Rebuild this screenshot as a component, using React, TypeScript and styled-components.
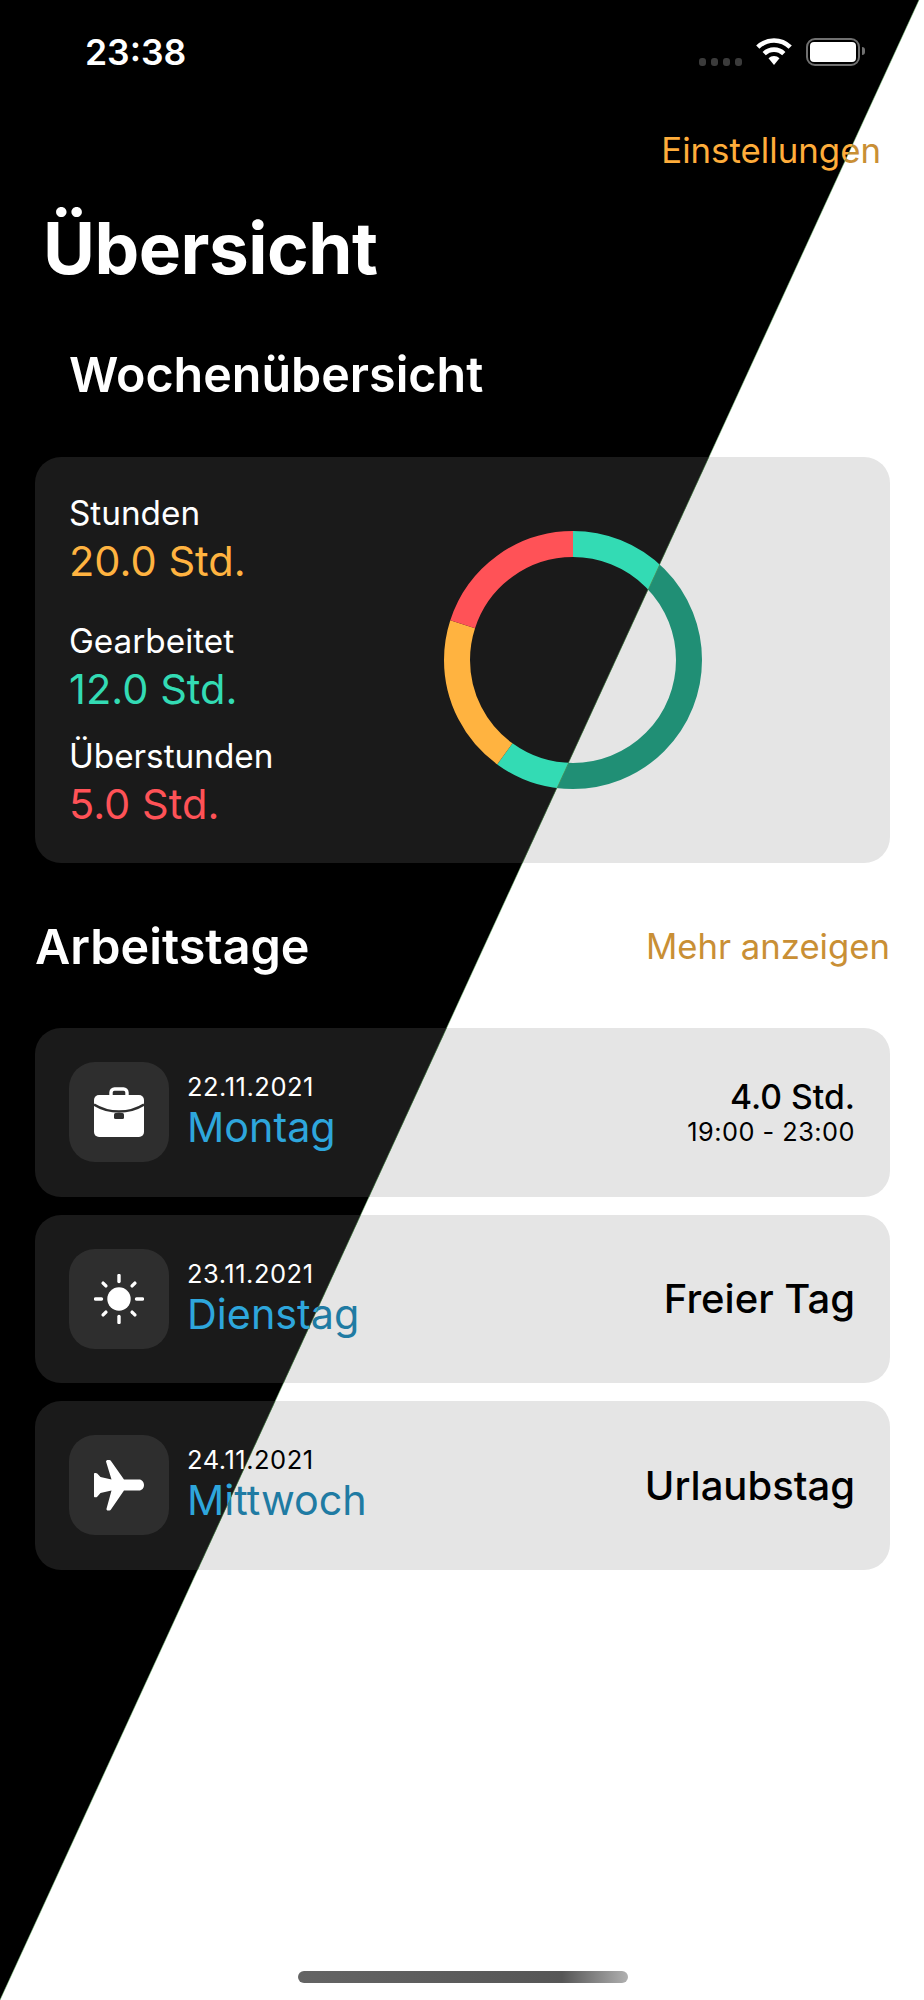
import React from "react";
import styled, { createGlobalStyle, ThemeProvider, useTheme } from "styled-components";

const GlobalStyle = createGlobalStyle`
  html, body {
    margin: 0;
    background: #fff;
    font-family: Inter, "Liberation Sans", sans-serif;
  }
`;

const lightTheme = {
  bg: "#ffffff",
  text: "#000000",
  card: "#e5e5e5",
  tile: "#d4d4d4",
  accent: "#c98f35",
  orange: "#c98f35",
  teal: "#208f75",
  red: "#c9434a",
  blue: "#1f7ba3",
};

const darkTheme = {
  bg: "#000000",
  text: "#ffffff",
  card: "#1a1a1a",
  tile: "#2e2e2e",
  accent: "#ffad3b",
  orange: "#ffb340",
  teal: "#33dbb4",
  red: "#ff5257",
  blue: "#2ea6dc",
};

type AppTheme = typeof darkTheme;
type Tone = "orange" | "teal" | "red";

const Page = styled.div`
  position: relative;
  width: 924px;
  height: 2000px;
  overflow: hidden;
`;

// The dark version lies over the light one, cut along the diagonal.
const DarkLayer = styled.div`
  position: absolute;
  inset: 0;
  clip-path: polygon(0 0, 919px 0, 0 100%);
`;

const SeamLine = styled.svg`
  position: absolute;
  inset: 0;
`;

const Screen = styled.div`
  width: 924px;
  height: 2000px;
  box-sizing: border-box;
  display: flex;
  flex-direction: column;
  background: ${({ theme }) => theme.bg};
  color: ${({ theme }) => theme.text};
`;

const StatusBar = styled.div`
  height: 104px;
  padding: 0 64px 0 85px;
  display: flex;
  align-items: center;
  justify-content: space-between;
`;

const Clock = styled.span`
  font-size: 35.5px;
  font-weight: 600;
`;

const StatusIcons = styled.div`
  display: flex;
  align-items: center;
`;

const SignalDots = styled.div`
  display: flex;
  gap: 5px;
  margin: 20px 14px 0 0;
`;

const SignalDot = styled.i`
  width: 7px;
  height: 8px;
  border-radius: 3px;
  background: #3b3b3b;
`;

const Battery = styled.div`
  position: relative;
  width: 54px;
  height: 28px;
  margin-left: 14px;
  box-sizing: border-box;
  border: 2.5px solid #707070;
  border-radius: 9px;
  padding: 2px;
  &::before {
    content: "";
    display: block;
    height: 100%;
    border-radius: 4px;
    background: ${({ theme }) => theme.text};
  }
  &::after {
    content: "";
    position: absolute;
    right: -7px;
    top: 6.5px;
    width: 3px;
    height: 8px;
    border-radius: 0 4px 4px 0;
    background: #707070;
  }
`;

const NavRow = styled.div`
  margin-top: 26px;
  padding-right: 43px;
  display: flex;
  justify-content: flex-end;
`;

const NavLink = styled.a`
  font-size: 34.8px;
  line-height: 40px;
  color: ${({ theme }) => theme.accent};
`;

const LargeTitle = styled.h1`
  margin: 38px 0 0 43px;
  font-size: 71px;
  line-height: 80px;
  font-weight: 700;
  letter-spacing: -0.5px;
`;

const WeekTitle = styled.h2`
  margin: 59px 0 0 69px;
  font-size: 48.4px;
  line-height: 56px;
  font-weight: 600;
`;

const Card = styled.section`
  margin: 54px 34px 0 35px;
  border-radius: 26px;
  background: ${({ theme }) => theme.card};
`;

const WeekCard = styled(Card)`
  height: 406px;
  padding-left: 34px;
  display: grid;
  grid-template-columns: 374px 260px;
  align-items: center;
`;

const Stats = styled.div`
  align-self: start;
  padding-top: 34px;
`;

const Stat = styled.div<{ $gap: number }>`
  margin-top: ${({ $gap }) => $gap}px;
`;

const StatLabel = styled.div`
  font-size: 33.3px;
  line-height: 44px;
`;

const StatValue = styled.div<{ $tone: Tone }>`
  font-size: 41.6px;
  line-height: 52px;
  color: ${({ theme, $tone }) => theme[$tone]};
`;

const RingChart = styled.svg`
  display: block;
`;

const SectionHead = styled.div`
  margin: 56px 34px 0 35px;
  display: flex;
  align-items: center;
  justify-content: space-between;
`;

const SectionTitle = styled.h2`
  margin: 0;
  font-size: 48.5px;
  line-height: 56px;
  font-weight: 600;
`;

const SectionLink = styled.a`
  margin-top: -3px;
  font-size: 34.7px;
  color: ${({ theme }) => theme.accent};
`;

const DayList = styled.div`
  margin-top: 53px;
  display: flex;
  flex-direction: column;
  gap: 18px;
`;

const DayCard = styled(Card)`
  margin-top: 0;
  height: 168.5px;
  padding: 0 35px 0 34px;
  display: flex;
  align-items: center;
`;

const IconTile = styled.div`
  width: 100px;
  height: 100px;
  flex: none;
  border-radius: 26px;
  display: flex;
  align-items: center;
  justify-content: center;
  background: ${({ theme }) => theme.tile};
`;

const DayText = styled.div`
  margin-left: 18px;
  flex: 1;
`;

const DayDate = styled.div`
  font-size: 25.5px;
  line-height: 30px;
  letter-spacing: 0.5px;
`;

const DayName = styled.div`
  font-size: 41.3px;
  line-height: 50px;
  color: ${({ theme }) => theme.blue};
`;

const DayDetail = styled.div`
  margin-top: 1px;
  text-align: right;
`;

const Hours = styled.div`
  font-size: 33.7px;
  line-height: 38px;
  font-weight: 500;
`;

const TimeRange = styled.div`
  font-size: 25.3px;
  line-height: 32px;
  letter-spacing: 0.5px;
`;

const DayKind = styled.div`
  font-size: 40px;
  line-height: 48px;
  font-weight: 500;
`;

const HomeIndicator = styled.div`
  position: absolute;
  left: 298px;
  top: 1971px;
  width: 330px;
  height: 12px;
  border-radius: 6px;
  background: linear-gradient(90deg, #646464 0%, #565656 80%, #b0b0b0 100%);
`;

const WifiIcon = () => (
  <svg width="36" height="28" viewBox="0 0 36 28" fill="none" stroke="#fff" strokeWidth="4.6">
    <path d="M1.8 9.2a23 23 0 0 1 32.4 0" />
    <path d="M8.2 15.6a14 14 0 0 1 19.6 0" />
    <path d="M12.5 20.2 18 27l5.500-6.800a8 8 0 0 0-11 0Z" fill="#fff" stroke="none" />
  </svg>
);

const BriefcaseIcon = () => {
  const theme = useTheme() as AppTheme;
  return (
    <svg width="50" height="50" viewBox="0 0 50 50">
      <path
        d="M17 9V5.500A3.500 3.500 0 0 1 20.500 2h9A3.500 3.500 0 0 1 33 5.500V9"
        fill="none"
        stroke={theme.text}
        strokeWidth="3.400"
      />
      <rect x="0" y="8" width="50" height="42" rx="5" fill={theme.text} />
      <path d="M0 17.500C8 22.500 16 24.500 25 24.500S42 22.500 50 17.500" fill="none" stroke={theme.tile} strokeWidth="2.400" />
      <rect x="20" y="26" width="10" height="6" rx="1.500" fill={theme.tile} />
    </svg>
  );
};

const SunIcon = () => {
  const theme = useTheme() as AppTheme;
  const rays = [0, 45, 90, 135, 180, 225, 270, 315];
  return (
    <svg width="50" height="50" viewBox="0 0 50 50">
      <circle cx="25" cy="25" r="11.700" fill={theme.text} />
      {rays.map((angle) => (
        <line
          key={angle}
          x1="25"
          x2="25"
          y1={angle % 90 === 0 ? 1.500 : 2.500}
          y2={angle % 90 === 0 ? 7.500 : 6.500}
          stroke={theme.text}
          strokeWidth="3.400"
          strokeLinecap="round"
          transform={`rotate(${angle} 25 25)`}
        />
      ))}
    </svg>
  );
};

const PlaneIcon = () => {
  const theme = useTheme() as AppTheme;
  return (
    <svg width="50" height="51" viewBox="0 0 50 51">
      <path
        fill={theme.text}
        d="M12 1.500C12 .5 13 0 14 0h1.500c.5 0 1 .3 1.300.8L30 19.500h15c3 0 5 2.500 5 5.500s-2 5.500-5 5.500H30L16.800 49.700c-.3.5-.8.8-1.300.8H14c-1 0-1.700-.8-1.500-1.800L17.500 30.500 6.500 33l-3.300 3.700c-.4.4-.8.500-1.500.5H1c-.6 0-1-.4-1-1V14c0-.6.4-1 1-1h.7c.6 0 1.100.2 1.500.5L6.500 17l11 2.500L12 1.500Z"
      />
    </svg>
  );
};

const ringSegments: { tone: Tone; start: number; share: number }[] = [
  { tone: "teal", start: 0, share: 60 },
  { tone: "orange", start: 60, share: 20 },
  { tone: "red", start: 80, share: 20 },
];

const WeekRing = () => {
  const theme = useTheme() as AppTheme;
  return (
    <RingChart width="260" height="260" viewBox="0 0 260 260">
      {ringSegments.map((s) => (
        <circle
          key={s.tone}
          cx="130"
          cy="130"
          r="116"
          fill="none"
          pathLength={100}
          stroke={theme[s.tone]}
          strokeWidth="26"
          strokeDasharray={`${s.share} ${100 - s.share}`}
          strokeDashoffset={-s.start}
          transform="rotate(-90 130 130)"
        />
      ))}
    </RingChart>
  );
};

const stats: { label: string; value: string; tone: Tone; gap: number }[] = [
  { label: "Stunden", value: "20.0 Std.", tone: "orange", gap: 0 },
  { label: "Gearbeitet", value: "12.0 Std.", tone: "teal", gap: 32 },
  { label: "Überstunden", value: "5.0 Std.", tone: "red", gap: 19 },
];

const days = [
  { date: "22.11.2021", name: "Montag", icon: <BriefcaseIcon />, hours: "4.0 Std.", range: "19:00 - 23:00" },
  { date: "23.11.2021", name: "Dienstag", icon: <SunIcon />, kind: "Freier Tag" },
  { date: "24.11.2021", name: "Mittwoch", icon: <PlaneIcon />, kind: "Urlaubstag" },
];

function Overview() {
  return (
    <Screen>
      <StatusBar>
        <Clock>23:38</Clock>
        <StatusIcons>
          <SignalDots>
            <SignalDot />
            <SignalDot />
            <SignalDot />
            <SignalDot />
          </SignalDots>
          <WifiIcon />
          <Battery />
        </StatusIcons>
      </StatusBar>
      <NavRow>
        <NavLink>Einstellungen</NavLink>
      </NavRow>
      <LargeTitle>Übersicht</LargeTitle>
      <WeekTitle>Wochenübersicht</WeekTitle>
      <WeekCard>
        <Stats>
          {stats.map((stat) => (
            <Stat key={stat.label} $gap={stat.gap}>
              <StatLabel>{stat.label}</StatLabel>
              <StatValue $tone={stat.tone}>{stat.value}</StatValue>
            </Stat>
          ))}
        </Stats>
        <WeekRing />
      </WeekCard>
      <SectionHead>
        <SectionTitle>Arbeitstage</SectionTitle>
        <SectionLink>Mehr anzeigen</SectionLink>
      </SectionHead>
      <DayList>
        {days.map((day) => (
          <DayCard key={day.date}>
            <IconTile>{day.icon}</IconTile>
            <DayText>
              <DayDate>{day.date}</DayDate>
              <DayName>{day.name}</DayName>
            </DayText>
            <DayDetail>
              {day.kind ? (
                <DayKind>{day.kind}</DayKind>
              ) : (
                <>
                  <Hours>{day.hours}</Hours>
                  <TimeRange>{day.range}</TimeRange>
                </>
              )}
            </DayDetail>
          </DayCard>
        ))}
      </DayList>
    </Screen>
  );
}

export default function App() {
  return (
    <Page>
      <GlobalStyle />
      <ThemeProvider theme={lightTheme}>
        <Overview />
      </ThemeProvider>
      <DarkLayer>
        <ThemeProvider theme={darkTheme}>
          <Overview />
        </ThemeProvider>
      </DarkLayer>
      <SeamLine width="924" height="2000">
        <line x1="919" y1="0" x2="0" y2="2000" stroke="#6fbf6f" strokeOpacity="0.5" />
      </SeamLine>
      <HomeIndicator />
    </Page>
  );
}
